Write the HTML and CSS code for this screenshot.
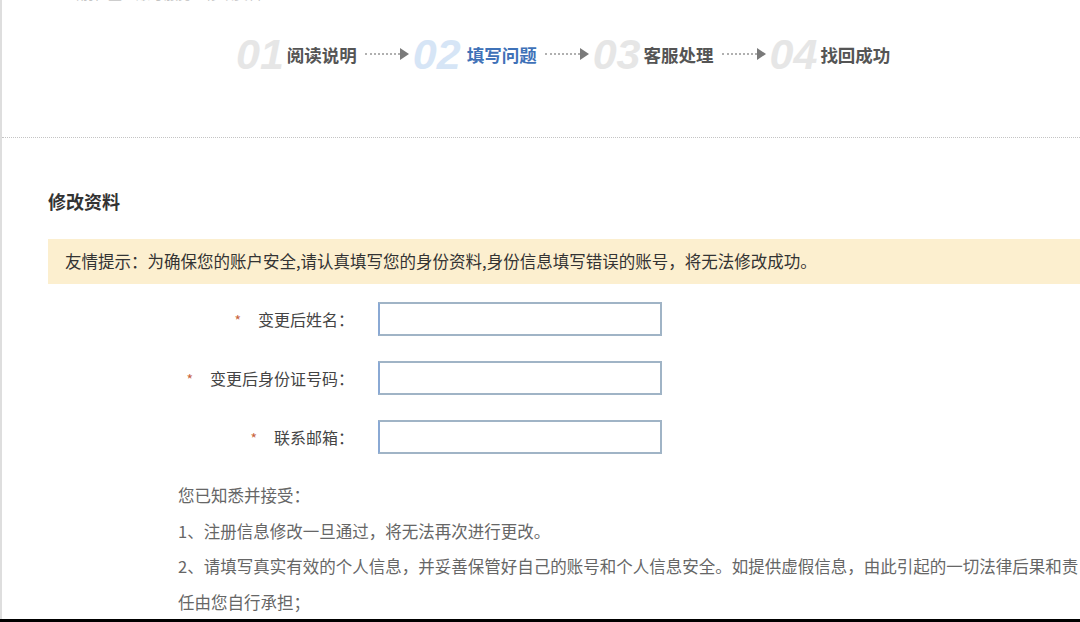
FILE: index.html
```html
<!DOCTYPE html>
<html lang="zh-CN">
<head>
<meta charset="utf-8">
<title>修改资料</title>
<link rel="stylesheet" href="styles.css">
</head>
<body>
<div class="page">
  <div class="header">
    <div class="crumb"><span class="crumb-dot"></span>当前位置：账号服务 &gt; 修改资料</div>
    <div class="steps">
      <div class="step">
        <span class="num">01</span><span class="label">阅读说明</span>
      </div>
      <div class="arrow"><span class="dots"></span><svg width="9" height="12" viewBox="0 0 9 12"><path d="M0 0 L9 6 L0 12 Z" fill="#7a7a7a"/></svg></div>
      <div class="step active">
        <span class="num">02</span><span class="label">填写问题</span>
      </div>
      <div class="arrow"><span class="dots"></span><svg width="9" height="12" viewBox="0 0 9 12"><path d="M0 0 L9 6 L0 12 Z" fill="#7a7a7a"/></svg></div>
      <div class="step">
        <span class="num">03</span><span class="label">客服处理</span>
      </div>
      <div class="arrow"><span class="dots"></span><svg width="9" height="12" viewBox="0 0 9 12"><path d="M0 0 L9 6 L0 12 Z" fill="#7a7a7a"/></svg></div>
      <div class="step">
        <span class="num">04</span><span class="label">找回成功</span>
      </div>
    </div>
  </div>

  <div class="content">
    <h2 class="title">修改资料</h2>
    <div class="notice">友情提示：为确保您的账户安全,请认真填写您的身份资料,身份信息填写错误的账号，将无法修改成功。</div>

    <form class="form">
      <div class="row">
        <label class="lbl"><span class="star">*</span>变更后姓名：</label>
        <input class="inp" type="text">
      </div>
      <div class="row">
        <label class="lbl"><span class="star">*</span>变更后身份证号码：</label>
        <input class="inp" type="text">
      </div>
      <div class="row">
        <label class="lbl"><span class="star">*</span>联系邮箱：</label>
        <input class="inp" type="text">
      </div>
    </form>

    <div class="agree">
      <p>您已知悉并接受：</p>
      <p>1、注册信息修改一旦通过，将无法再次进行更改。</p>
      <p>2、请填写真实有效的个人信息，并妥善保管好自己的账号和个人信息安全。如提供虚假信息，由此引起的一切法律后果和责任由您自行承担；</p>
    </div>
  </div>
</div>
<div class="bottom-bar"></div>
</body>
</html>
```

FILE: styles.css
```css
html, body {
  margin: 0;
  padding: 0;
  overflow: hidden;
  background: #fff;
}
body {
  font-family: "Noto Sans CJK SC", "Liberation Sans", sans-serif;
  color: #333;
  width: 1080px;
  height: 622px;
}
.page {
  width: 1120px;
  border-left: 2px solid #dedede;
  min-height: 640px;
}
.header {
  border-bottom: 1px dotted #c4c4c4;
  padding-bottom: 58px;
}
.crumb {
  height: 20px;
  line-height: 20px;
  margin-top: -17px;
  padding-left: 50px;
  font-size: 14px;
  color: #c4c4c4;
  display: flex;
  align-items: center;
  gap: 8px;
}
.crumb-dot {
  width: 6px;
  height: 6px;
  background: #ccc;
  border-radius: 50%;
}
.steps {
  display: flex;
  align-items: center;
  height: 50px;
  margin-top: 26px;
  padding-left: 234px;
}
.step {
  display: flex;
  align-items: center;
}
.num {
  font-family: "Liberation Sans", Arial, sans-serif;
  font-style: italic;
  font-weight: bold;
  font-size: 43px;
  line-height: 50px;
  color: #e6e6e6;
  margin-right: 3px;
}
.label {
  font-size: 17.5px;
  font-weight: bold;
  color: #555;
}
.step.active .num {
  color: #d6e5f6;
}
.step.active .label {
  color: #3f72b8;
  margin-left: 3px;
}
.arrow {
  display: flex;
  align-items: center;
  margin: 0 4px 0 8px;
}
.dots {
  width: 35px;
  border-top: 2px dotted #b0b0b0;
  height: 0;
}
.arrow svg {
  display: block;
}
.content {
  padding-left: 46px;
}
.title {
  margin: 51px 0 0 0;
  font-size: 18px;
  line-height: 24px;
  font-weight: bold;
  color: #333;
}
.notice {
  margin-top: 26px;
  height: 45px;
  line-height: 45px;
  background: #fcefcf;
  padding-left: 17px;
  font-size: 16.5px;
  color: #333;
}
.form {
  margin: 18px 0 0 0;
  display: flex;
  flex-direction: column;
  gap: 25px;
}
.row {
  display: flex;
  align-items: center;
  height: 34px;
}
.lbl {
  width: 306px;
  text-align: right;
  font-size: 16px;
  color: #444;
  margin-right: 24px;
}
.star {
  color: #c8643c;
  font-size: 14px;
  margin-right: 17px;
}
.inp {
  box-sizing: border-box;
  width: 284px;
  height: 34px;
  border: 2px solid #a0b4c6;
  border-left-color: #8aa9d4;
  background: #fff;
  margin: 0;
  padding: 0 8px;
  outline: none;
}
.agree {
  margin: 24px 0 0 130px;
  width: 908px;
  font-size: 16.5px;
  line-height: 35.5px;
  color: #666;
}
.agree p {
  margin: 0;
}
.bottom-bar {
  position: fixed;
  left: 0;
  right: 0;
  bottom: 0;
  height: 3px;
  background: #000;
}
```
